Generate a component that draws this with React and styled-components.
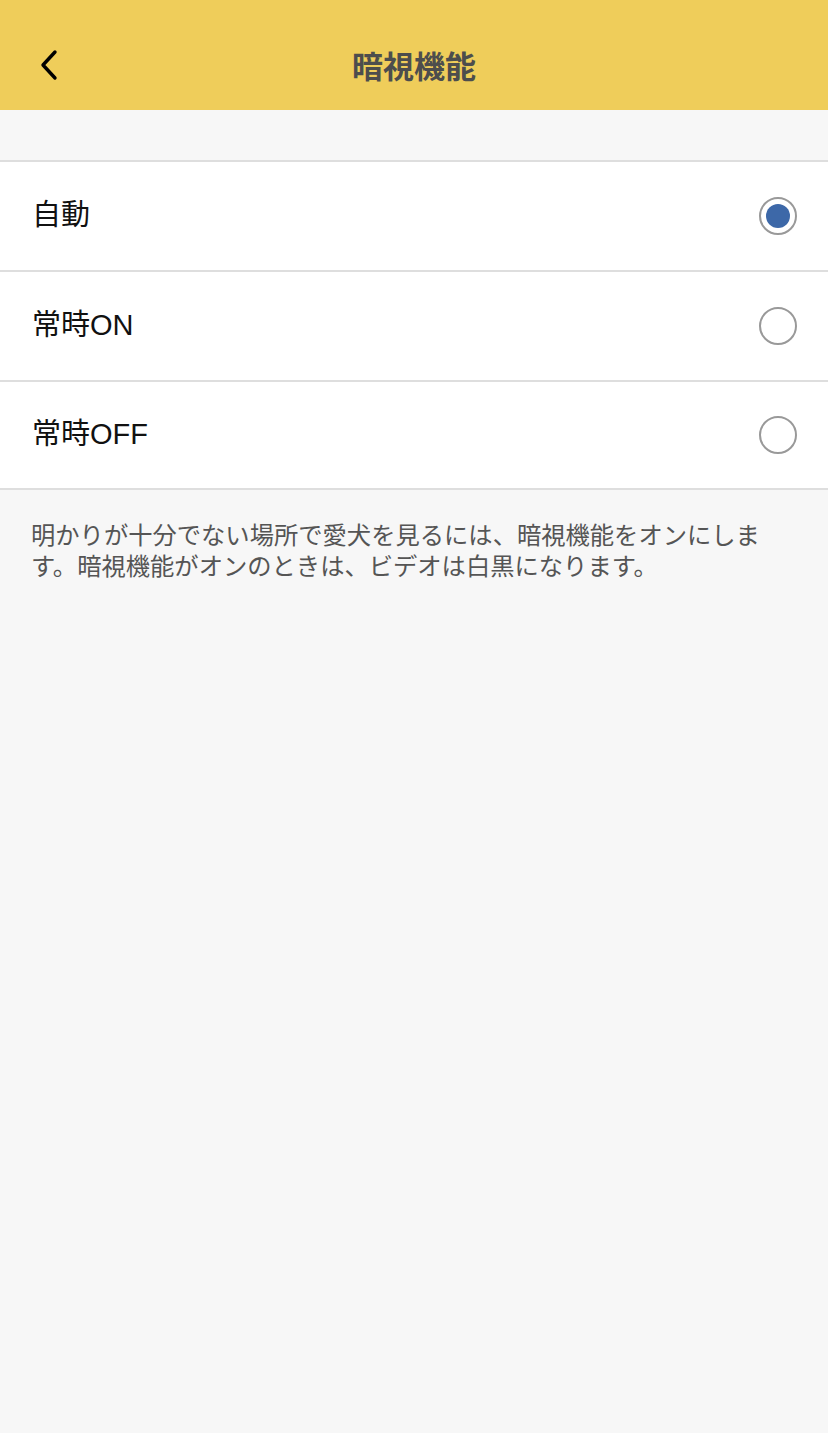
import React, { useState } from 'react';
import styled, { createGlobalStyle } from 'styled-components';

const GlobalStyle = createGlobalStyle`
  html, body {
    margin: 0;
    padding: 0;
    background: #f7f7f7;
  }
  body {
    font-family: "Liberation Sans", "Noto Sans CJK JP", sans-serif;
  }
`;

const Page = styled.div`
  min-height: 1433px;
  background: #f7f7f7;
`;

const Header = styled.header`
  position: relative;
  height: 110px;
  background: #efcd5a;
  display: flex;
  align-items: center;
  justify-content: center;
  padding-top: 19px;
  box-sizing: border-box;
`;

const BackButton = styled.button`
  position: absolute;
  left: 28px;
  top: 44px;
  width: 42px;
  height: 42px;
  border: 0;
  background: transparent;
  padding: 0;
  display: flex;
  align-items: center;
  justify-content: center;
  cursor: pointer;
`;

const Title = styled.h1`
  margin: 0;
  font-family: "Noto Sans CJK JP", sans-serif;
  font-weight: 700;
  font-size: 31px;
  line-height: 40px;
  color: #4d4d4d;
`;

const Spacer = styled.div`
  height: 50px;
`;

const OptionList = styled.ul`
  list-style: none;
  margin: 0;
  padding: 0;
  background: #fff;
  border-top: 2px solid #dedede;
`;

const OptionRow = styled.li`
  height: ${p => (p.$last ? 106 : 108)}px;
  display: flex;
  align-items: center;
  justify-content: space-between;
  padding: 0 31px 0 32px;
  border-bottom: 2px solid #dedede;
  cursor: pointer;
`;

const OptionLabel = styled.span`
  font-size: 29px;
  line-height: 34px;
  margin-bottom: 3px;
  color: #111;
`;

const Radio = styled.span`
  width: 34px;
  height: 34px;
  border-radius: 50%;
  border: 2px solid #999;
  display: flex;
  align-items: center;
  justify-content: center;

  &::after {
    content: '';
    width: 24px;
    height: 24px;
    border-radius: 50%;
    background: ${p => (p.$checked ? '#3d68a8' : 'transparent')};
  }
`;

const Note = styled.p`
  margin: 0;
  padding: 28px 46px 0 31px;
  font-family: "Noto Sans CJK JP", sans-serif;
  font-size: 24.3px;
  line-height: 31px;
  color: #555;
`;

const options = [
  { id: 'auto', label: '自動' },
  { id: 'on', label: '常時ON' },
  { id: 'off', label: '常時OFF' },
];

export default function App() {
  const [mode, setMode] = useState('auto');

  return (
    <Page>
      <GlobalStyle />
      <Header>
        <BackButton aria-label="戻る">
          <svg width="24" height="32" viewBox="0 0 24 32" fill="none">
            <path d="M18 3 L6 16 L18 29" stroke="#000" strokeWidth="3.4" strokeLinecap="round" strokeLinejoin="round" />
          </svg>
        </BackButton>
        <Title>暗視機能</Title>
      </Header>
      <Spacer />
      <OptionList>
        {options.map((o, i) => (
          <OptionRow key={o.id} $last={i === options.length - 1} onClick={() => setMode(o.id)}>
            <OptionLabel>{o.label}</OptionLabel>
            <Radio $checked={mode === o.id} />
          </OptionRow>
        ))}
      </OptionList>
      <Note>
        明かりが十分でない場所で愛犬を見るには、暗視機能をオンにします。暗視機能がオンのときは、ビデオは白黒になります。
      </Note>
    </Page>
  );
}
